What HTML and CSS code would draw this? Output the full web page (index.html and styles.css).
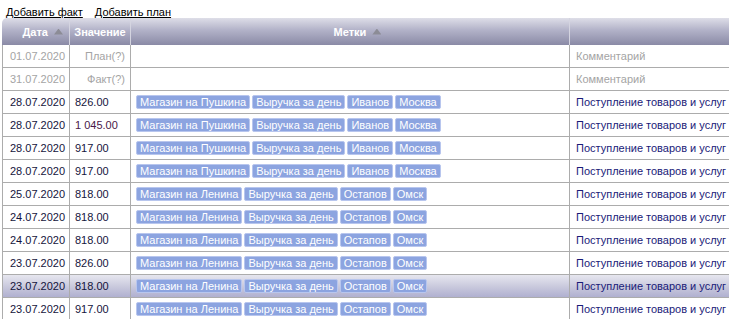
FILE: index.html
```html
<!DOCTYPE html>
<html lang="ru">
<head>
<meta charset="utf-8">
<link rel="stylesheet" href="styles.css">
</head>
<body>
<div class="toolbar"><a href="#">Добавить факт</a><a href="#">Добавить план</a></div>
<table class="grid">
  <colgroup><col class="c-date"><col class="c-val"><col class="c-tags"><col class="c-comm"></colgroup>
  <thead>
    <tr>
      <th class="h-date"><span class="sort">Дата</span></th>
      <th class="h-val">Значение</th>
      <th class="h-tags"><span class="sort">Метки</span></th>
      <th class="h-comm"></th>
    </tr>
  </thead>
  <tbody>
    <tr class="stub"><td class="date">01.07.2020</td><td class="val right">План(?)</td><td></td><td class="comm">Комментарий</td></tr>
    <tr class="stub"><td class="date">31.07.2020</td><td class="val right">Факт(?)</td><td></td><td class="comm">Комментарий</td></tr>
    <tr><td class="date">28.07.2020</td><td class="val">826.00</td><td class="tags"><span class="tag">Магазин на Пушкина</span><span class="tag">Выручка за день</span><span class="tag">Иванов</span><span class="tag">Москва</span></td><td class="comm">Поступление товаров и услуг</td></tr>
    <tr><td class="date">28.07.2020</td><td class="val big">1 045.00</td><td class="tags"><span class="tag">Магазин на Пушкина</span><span class="tag">Выручка за день</span><span class="tag">Иванов</span><span class="tag">Москва</span></td><td class="comm">Поступление товаров и услуг</td></tr>
    <tr><td class="date">28.07.2020</td><td class="val">917.00</td><td class="tags"><span class="tag">Магазин на Пушкина</span><span class="tag">Выручка за день</span><span class="tag">Иванов</span><span class="tag">Москва</span></td><td class="comm">Поступление товаров и услуг</td></tr>
    <tr><td class="date">28.07.2020</td><td class="val">917.00</td><td class="tags"><span class="tag">Магазин на Пушкина</span><span class="tag">Выручка за день</span><span class="tag">Иванов</span><span class="tag">Москва</span></td><td class="comm">Поступление товаров и услуг</td></tr>
    <tr><td class="date">25.07.2020</td><td class="val">818.00</td><td class="tags"><span class="tag">Магазин на Ленина</span><span class="tag">Выручка за день</span><span class="tag">Остапов</span><span class="tag">Омск</span></td><td class="comm">Поступление товаров и услуг</td></tr>
    <tr><td class="date">24.07.2020</td><td class="val">818.00</td><td class="tags"><span class="tag">Магазин на Ленина</span><span class="tag">Выручка за день</span><span class="tag">Остапов</span><span class="tag">Омск</span></td><td class="comm">Поступление товаров и услуг</td></tr>
    <tr><td class="date">24.07.2020</td><td class="val">818.00</td><td class="tags"><span class="tag">Магазин на Ленина</span><span class="tag">Выручка за день</span><span class="tag">Остапов</span><span class="tag">Омск</span></td><td class="comm">Поступление товаров и услуг</td></tr>
    <tr><td class="date">23.07.2020</td><td class="val">826.00</td><td class="tags"><span class="tag">Магазин на Ленина</span><span class="tag">Выручка за день</span><span class="tag">Остапов</span><span class="tag">Омск</span></td><td class="comm">Поступление товаров и услуг</td></tr>
    <tr class="selected"><td class="date">23.07.2020</td><td class="val">818.00</td><td class="tags"><span class="tag">Магазин на Ленина</span><span class="tag">Выручка за день</span><span class="tag">Остапов</span><span class="tag">Омск</span></td><td class="comm">Поступление товаров и услуг</td></tr>
    <tr><td class="date">23.07.2020</td><td class="val">917.00</td><td class="tags"><span class="tag">Магазин на Ленина</span><span class="tag">Выручка за день</span><span class="tag">Остапов</span><span class="tag">Омск</span></td><td class="comm">Поступление товаров и услуг</td></tr>
  </tbody>
</table>
</body>
</html>
```
FILE: styles.css
```css
html, body {
  margin: 0;
  padding: 0;
  background: #fff;
  overflow: hidden;
}
body {
  font-family: "Liberation Sans", Arial, sans-serif;
  font-size: 11px;
  color: #14143c;
}
.toolbar {
  display: flex;
  gap: 12px;
  padding: 6px 0 0 6px;
  height: 12px;
  font-size: 11px;
  line-height: 12px;
}
.toolbar a {
  color: #000;
  text-decoration: underline;
}
.grid {
  margin-left: 2px;
  border-collapse: separate;
  border-spacing: 0;
  table-layout: fixed;
  width: 727px;
}
.c-date { width: 67px; }
.c-val { width: 61px; }
.c-tags { width: 439px; }
.c-comm { width: 160px; }
.grid th {
  height: 27px;
  padding: 0;
  color: #fff;
  font-weight: bold;
  font-size: 11px;
  background: linear-gradient(to bottom, #dedee8 0%, #b2b2c8 45%, #8a8aa6 100%);
  border-left: 1px solid #d4d4e0;
  white-space: nowrap;
}
.grid th:first-child {
  border-left: none;
  border-top-left-radius: 5px;
}
.grid th.h-date { text-align: right; padding-right: 21px; }
.h-val { text-align: center; }
.h-tags { text-align: center; }
.sort {
  position: relative;
  display: inline-block;
}
.sort::after {
  content: "";
  position: absolute;
  left: calc(100% + 6px);
  top: 50%;
  width: 9px;
  height: 6px;
  margin-top: -3px;
  clip-path: polygon(50% 0, 100% 100%, 0 100%);
  background-color: #8c8c96;
}
.grid td {
  height: 21px;
  padding: 0 5px 1px;
  border-bottom: 1px solid #acacac;
  border-left: 1px solid #acacac;
  white-space: nowrap;
  overflow: hidden;
  line-height: 14px;
}
.grid td.date { padding-left: 7px; }
.grid td.val.right { text-align: right; }
.grid td.val.big { color: #4a1848; }
.grid td.tags { padding: 0 0 0 5px; height: 22px; font-size: 0; }
.grid td.comm { color: #1a1a78; padding-left: 6px; padding-right: 0; text-overflow: clip; }
.stub td { color: #a4a4a4; }
.stub td.comm { color: #a4a4a4; }
.selected td {
  background: linear-gradient(to bottom, #e6e6ef 0%, #c8c8dc 55%, #b0b0d0 100%);
}
.tag {
  display: inline-block;
  height: 12px;
  line-height: 12px;
  padding: 0 3px;
  margin-right: 2px;
  font-size: 11px;
  color: #fff;
  background: #8ca4e0;
  border: 1px solid #b8c6ee;
  border-radius: 2px;
  vertical-align: middle;
}
```
